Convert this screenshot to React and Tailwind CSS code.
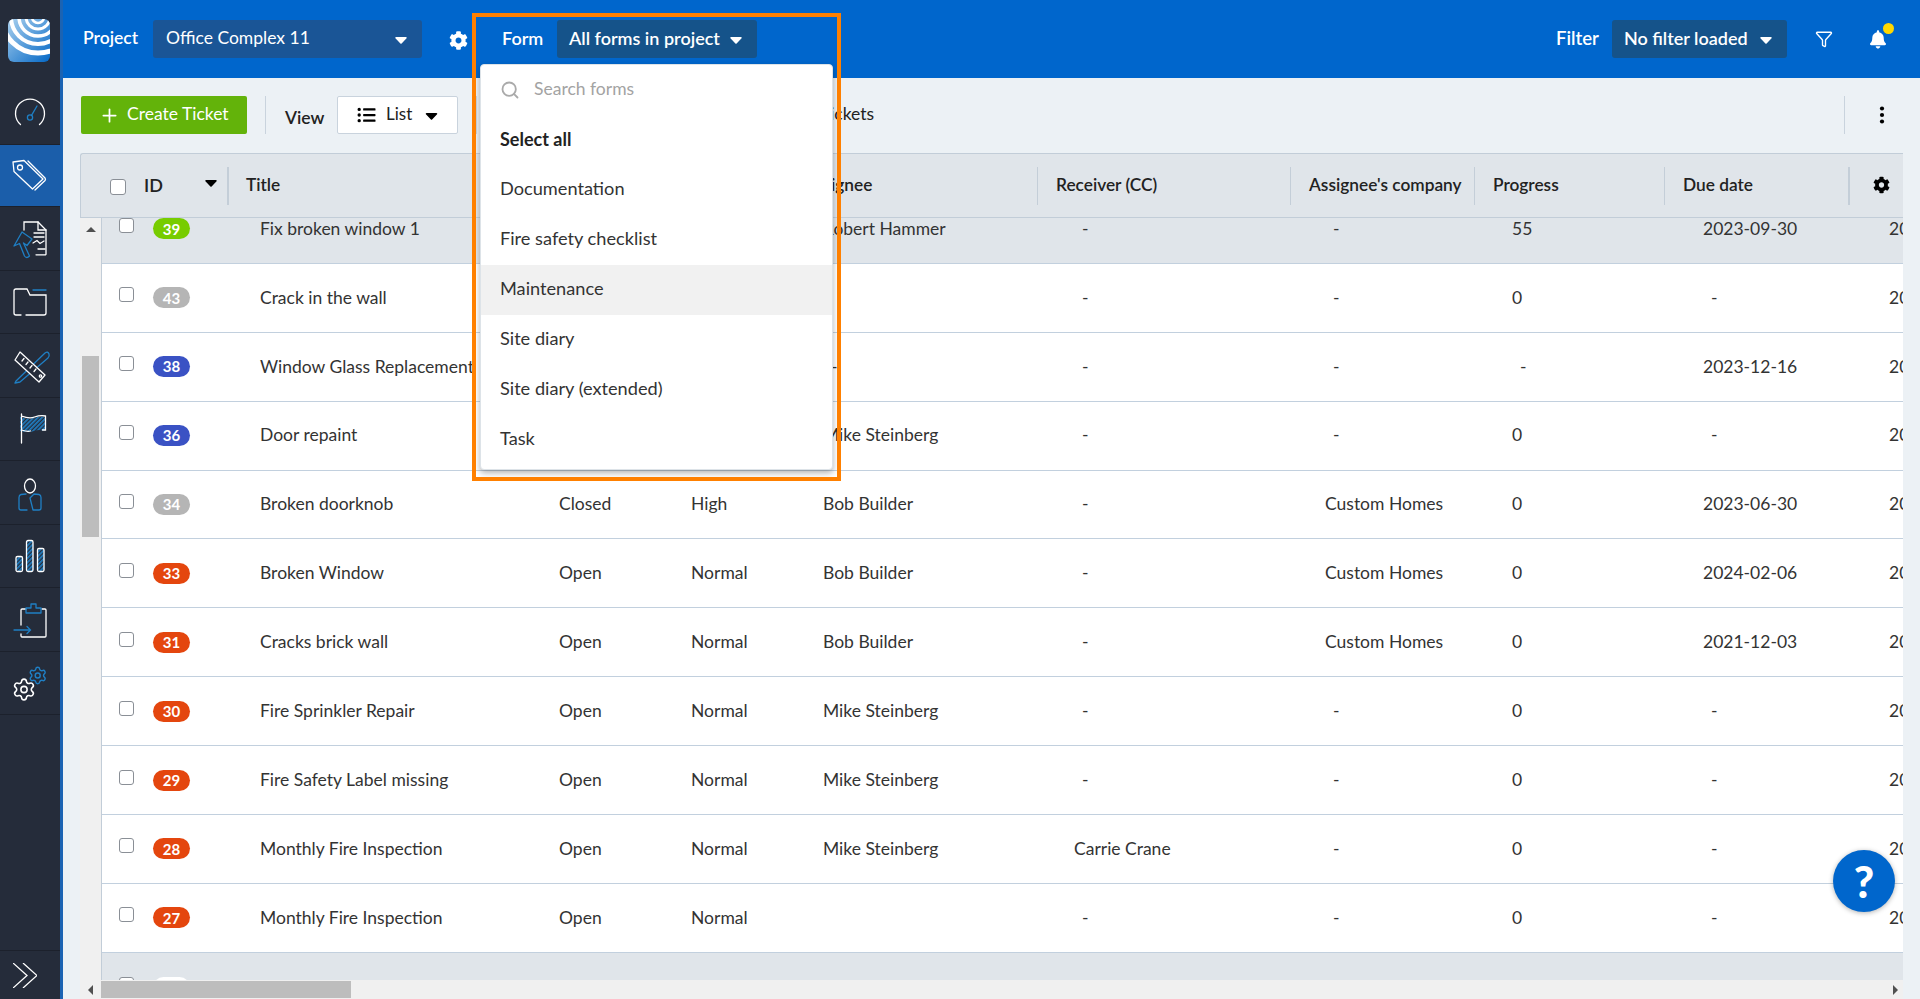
import { Plus, Search, Funnel, Settings } from "lucide-react";
import { FaCog, FaBell, FaListUl } from "react-icons/fa";

const BLUE = "#1f7fc4";

const rows = [
  { id: 39, color: "bg-[#77cc00]", title: "Fix broken window 1", status: "Open", priority: "Normal", assignee: "Robert Hammer", cc: "-", company: "-", progress: "55", due: "2023-09-30", selected: true },
  { id: 43, color: "bg-[#b5b5b5]", title: "Crack in the wall", status: "Closed", priority: "Normal", assignee: "", cc: "-", company: "-", progress: "0", due: "-" },
  { id: 38, color: "bg-[#3a52c4]", title: "Window Glass Replacement", status: "Open", priority: "Normal", assignee: "-", cc: "-", company: "-", progress: "-", due: "2023-12-16" },
  { id: 36, color: "bg-[#3a52c4]", title: "Door repaint", status: "Open", priority: "Normal", assignee: "Mike Steinberg", cc: "-", company: "-", progress: "0", due: "-" },
  { id: 34, color: "bg-[#b5b5b5]", title: "Broken doorknob", status: "Closed", priority: "High", assignee: "Bob Builder", cc: "-", company: "Custom Homes", progress: "0", due: "2023-06-30" },
  { id: 33, color: "bg-[#e4460e]", title: "Broken Window", status: "Open", priority: "Normal", assignee: "Bob Builder", cc: "-", company: "Custom Homes", progress: "0", due: "2024-02-06" },
  { id: 31, color: "bg-[#e4460e]", title: "Cracks brick wall", status: "Open", priority: "Normal", assignee: "Bob Builder", cc: "-", company: "Custom Homes", progress: "0", due: "2021-12-03" },
  { id: 30, color: "bg-[#e4460e]", title: "Fire Sprinkler Repair", status: "Open", priority: "Normal", assignee: "Mike Steinberg", cc: "-", company: "-", progress: "0", due: "-" },
  { id: 29, color: "bg-[#e4460e]", title: "Fire Safety Label missing", status: "Open", priority: "Normal", assignee: "Mike Steinberg", cc: "-", company: "-", progress: "0", due: "-" },
  { id: 28, color: "bg-[#e4460e]", title: "Monthly Fire Inspection", status: "Open", priority: "Normal", assignee: "Mike Steinberg", cc: "Carrie Crane", company: "-", progress: "0", due: "-" },
  { id: 27, color: "bg-[#e4460e]", title: "Monthly Fire Inspection", status: "Open", priority: "Normal", assignee: "", cc: "-", company: "-", progress: "0", due: "-" },
];

const forms = ["Documentation", "Fire safety checklist", "Maintenance", "Site diary", "Site diary (extended)", "Task"];

function Caret({ className = "" }) {
  return (
    <svg viewBox="0 0 12 7" className={`w-[12px] h-[7px] ${className}`} fill="currentColor">
      <path d="M1 0h10a.8.8 0 0 1 .6 1.3L6.6 6.4a.8.8 0 0 1-1.2 0L.4 1.3A.8.8 0 0 1 1 0z" />
    </svg>
  );
}

function Hatch({ id }) {
  return (
    <pattern id={id} width="3" height="3" patternUnits="userSpaceOnUse" patternTransform="rotate(45)">
      <rect width="1.7" height="3" fill={BLUE} />
    </pattern>
  );
}

/* sidebar icons, 44x44 box */
const icons = {
  dashboard: (
    <>
      <path d="M12.5 33.5A14.5 14.5 0 1 1 31.5 33.5" stroke="#fff" />
      <circle cx="22" cy="26.5" r="2.6" stroke={BLUE} />
      <path d="M23.5 24.3 29 15" stroke={BLUE} />
    </>
  ),
  tag: (
    <>
      <path d="M5 8l11-1.500 19 18.500-10.500 10L6 17.500z" stroke="#fff" strokeLinejoin="round" />
      <path d="M20 7l17 17a2 2 0 0 1 0 2.500L27 36" stroke="#fff" />
      <circle cx="12" cy="13.500" r="2.500" stroke="#fff" />
    </>
  ),
  report: (
    <>
      <path d="M16 13V5h14l8 8v24a.8.8 0 0 1-1 .8H28" stroke="#fff" />
      <path d="M30 5v8h8" stroke="#fff" />
      <path d="M26 16h10M26 20h10M25 26l4-2.500 3 3 4-2.500M30 32h7" stroke="#fff" />
      <path d="M6 29l8-14 10 7-5 6.500-3.500-2.500 6 13q-3 3-5 0l-5-12.500z" stroke={BLUE} strokeLinejoin="round" />
    </>
  ),
  folder: (
    <>
      <path d="M13 35H8a2 2 0 0 1-2-2V11a2 2 0 0 1 2-2h11l3 6h16v18a2 2 0 0 1-2 2H18" stroke="#fff" />
      <path d="M25 10h13" stroke={BLUE} />
    </>
  ),
  tools: (
    <>
      <path d="M8 37 37 9q3-2 4 1 .8 2.500-1 4L12 38l-5 1z" stroke={BLUE} strokeLinejoin="round" />
      <path d="M12 8 37 31l-6 7L7 16z" stroke="#fff" fill="#252c3a" strokeLinejoin="round" />
      <path d="M14 17l2-2.500M18 20.500l2-2.500M22 24l2-2.500M26 27.500l2-2.500" stroke="#fff" />
      <circle cx="32.500" cy="32" r="1.200" stroke="#fff" />
    </>
  ),
  flag: (
    <>
      <path d="M12 9h0q8 3 14 1 6-2 11-1v14q-6-2-11 0t-14 0z" fill="url(#hatch-flag)" transform="translate(0 1)" />
      <path d="M13.500 7v29M13.500 9q8 3 13 1 6-2 11-1v14h-3M13.500 23q6 2 9 1" stroke="#fff" />
    </>
  ),
  person: (
    <>
      <ellipse cx="22" cy="15" rx="5.500" ry="7" stroke="#fff" />
      <path d="M18 23l-5 .5q-2 .5-2 3V37q0 2 2 2h6M25 39h6q2 0 2-2V26.500q0-2.500-2-3l-5-.5-4 4z" stroke={BLUE} strokeLinejoin="round" />
    </>
  ),
  bars: (
    <>
      <rect x="8" y="22.500" width="6.500" height="15" rx="1.500" fill="url(#hatch-bars)" stroke="#fff" />
      <rect x="18.500" y="6.500" width="6.500" height="31" rx="1.500" fill="url(#hatch-bars)" stroke="#fff" />
      <rect x="29.500" y="14.500" width="6.500" height="23" rx="1.500" fill="url(#hatch-bars)" stroke="#fff" />
    </>
  ),
  clipboard: (
    <>
      <path d="M18 11h-4q-1 0-1 1v15M13 36v2q0 1 1 1h23q1 0 1-1V12q0-1-1-1h-3" stroke="#fff" />
      <path d="M18 15v-5h5V6h5v4h5v5z" stroke={BLUE} strokeLinejoin="round" />
      <path d="M6 32h16M19 28.500l3.500 3.500-3.500 3.500" stroke={BLUE} />
    </>
  ),
  gears: (
    <>
      <Settings x="3.500" y="16" width="25" height="25" color="#fff" strokeWidth={1.500} />
      <Settings x="19.700" y="4.500" width="20" height="20" color={BLUE} strokeWidth={1.700} />
    </>
  ),
};

function NavItem({ name, active, height }) {
  return (
    <div className={`${height} flex items-center justify-center border-b border-[#1c212c] ${active ? "bg-[#1b5eaa]" : ""}`}>
      <svg viewBox="0 0 44 44" className="w-[44px] h-[44px]" fill="none" strokeWidth="1.300" strokeLinecap="round">
        <defs>
          <Hatch id="hatch-flag" />
          <Hatch id="hatch-bars" />
        </defs>
        {icons[name]}
      </svg>
    </div>
  );
}

function Logo() {
  return (
    <svg viewBox="0 0 42 43" className="w-[42px] h-[43px] ml-[8px] mt-[19px]">
      <defs>
        <clipPath id="logo-clip">
          <rect width="42" height="43" rx="6" />
        </clipPath>
        <linearGradient id="logo-bg" x1="0" y1="0" x2="1" y2="1">
          <stop offset="0" stopColor="#a9d0ee" />
          <stop offset="1" stopColor="#0468c6" />
        </linearGradient>
      </defs>
      <g clipPath="url(#logo-clip)">
        <rect width="42" height="43" fill="url(#logo-bg)" />
        <g fill="none" stroke="#fff">
          <circle cx="30" cy="-2" r="6" strokeWidth="2.500" />
          <circle cx="30" cy="-2" r="12" strokeWidth="3" />
          <circle cx="30" cy="-2" r="19" strokeWidth="3.500" />
          <circle cx="30" cy="-2" r="27" strokeWidth="4" />
          <circle cx="30" cy="-2" r="36" strokeWidth="5" />
        </g>
      </g>
    </svg>
  );
}

function Sidebar() {
  return (
    <aside className="w-[63px] shrink-0 h-full flex flex-col bg-[#252c3a] border-r-[3px] border-[#1b63b3]">
      <div className="h-[81px] shrink-0">
        <Logo />
      </div>
      <div className="h-[64px] flex items-center justify-center border-b border-[#1c212c]">
        <svg viewBox="0 0 44 44" className="w-[44px] h-[44px] mt-[1px]" fill="none" strokeWidth="1.300" strokeLinecap="round">
          {icons.dashboard}
        </svg>
      </div>
      <NavItem name="tag" active height="h-[62px]" />
      <NavItem name="report" height="h-[64px]" />
      <NavItem name="folder" height="h-[63px]" />
      <NavItem name="tools" height="h-[64px]" />
      <NavItem name="flag" height="h-[63px]" />
      <NavItem name="person" height="h-[64px]" />
      <NavItem name="bars" height="h-[63px]" />
      <NavItem name="clipboard" height="h-[64px]" />
      <NavItem name="gears" height="h-[63px]" />
      <div className="flex-1" />
      <div className="h-[49px] border-t border-[#1c212c] flex items-center pl-[13px]">
        <svg viewBox="0 0 24 25" className="w-[24px] h-[25px]" fill="none" stroke="#fff" strokeWidth="1.300">
          <path d="M0 0l14 12.500L0 25M10 0l14 12.500L10 25" />
        </svg>
      </div>
    </aside>
  );
}

function HeaderSelect({ label, width, bg, bold }) {
  return (
    <div className={`${width} ${bg} h-[38px] rounded-[3px] flex items-center justify-between pr-[15px] text-white ${bold ? "pl-[12px] font-semibold text-[18px]" : "pl-[13px] font-normal text-[17.5px]"}`}>
      <span className="-mt-[2px] whitespace-nowrap">{label}</span>
      <Caret className="mt-[2px]" />
    </div>
  );
}

function TopBar() {
  return (
    <header className="h-[78px] shrink-0 bg-[#0066cc] flex items-center pl-[20px] pr-[34px] text-white text-[18px] font-semibold">
      <span className="w-[70px] -mt-[1px] text-[17.5px]">Project</span>
      <HeaderSelect label="Office Complex 11" width="w-[269px]" bg="bg-[#1a5596]" />
      <FaCog className="w-[19px] h-[21px] ml-[27px] mt-[2px]" />
      <span className="ml-[34px] w-[55px] -mt-[1px]">Form</span>
      <HeaderSelect label="All forms in project" width="w-[200px]" bg="bg-[#15538a]" bold />
      <span className="ml-auto w-[56px] -mt-[1px] text-[18.5px]">Filter</span>
      <HeaderSelect label="No filter loaded" width="w-[175px]" bg="bg-[#15538a]" bold />
      <Funnel className="w-[18px] h-[18px] ml-[28px]" strokeWidth={1.800} />
      <div className="relative ml-[37px]">
        <FaBell className="w-[16px] h-[19px]" />
        <span className="absolute -top-[7px] -right-[8px] w-[11px] h-[11px] rounded-full bg-[#ffd800]" />
      </div>
    </header>
  );
}

function Toolbar() {
  return (
    <div className="h-[38px] mt-[18px] ml-[18px] mr-[17px] flex items-stretch shrink-0 text-[#222]">
      <button className="w-[166px] bg-[#63b30a] rounded-[2px] text-white text-[17.5px] flex items-center pl-[18px]">
        <Plus className="w-[21px] h-[21px] mr-[7px]" strokeWidth={2} />
        <span className="-mt-[2px]">Create Ticket</span>
      </button>
      <div className="w-px bg-[#c9d3dd] ml-[18px]" />
      <span className="ml-[19px] w-[52px] self-center mt-[6px] text-[17.5px] font-semibold">View</span>
      <div className="w-[121px] bg-white border border-[#c9d3dd] rounded-[2px] flex items-center pl-[18px]">
        <FaListUl className="w-[21px] h-[18px] text-black" />
        <span className="ml-[9px] text-[17px] -mt-[2px]">List</span>
        <Caret className="ml-[13px] mt-[2px] text-black w-[13px]" />
      </div>
      <div className="w-px bg-[#c9d3dd] ml-[18px]" />
      <span className="ml-[322px] self-center text-[17.5px] -mt-[1px]">All tickets</span>
      <div className="ml-auto w-px bg-[#c9d3dd]" />
      <svg viewBox="0 0 6 18" className="w-[6px] h-[18px] self-center ml-[34px] mr-[18px]" fill="#000">
        <circle cx="3" cy="2.500" r="2.100" />
        <circle cx="3" cy="9" r="2.100" />
        <circle cx="3" cy="15.500" r="2.100" />
      </svg>
    </div>
  );
}

function HeadCell({ children, thick }) {
  return (
    <div className={`h-[38px] flex items-center pl-[18px] whitespace-nowrap font-semibold text-[17.3px] border-l border-[#c4ced8] ${thick ? "border-l-[2px]" : ""}`}>
      {children}
    </div>
  );
}

function TableHead() {
  return (
    <div className="relative z-10 h-[65px] shrink-0 bg-[#e0e5ea] border border-[#c2cdd8] border-r-0 rounded-tl-[3px] grid grid-cols-[146px_313px_132px_113px_252px_253px_184px_190px_184px_55px] items-center text-[#222]">
      <div className="flex items-center pl-[29px] font-semibold text-[18px]">
        <span className="w-[16px] h-[16px] rounded-[3px] bg-white border border-[#8a8f96] mt-[2px]" />
        <span className="ml-[18px] -mt-[1px]">ID</span>
        <Caret className="ml-[42px] -mt-[4px] text-black" />
      </div>
      <HeadCell thick>
        <span className="-mt-[1px] -ml-[1px]">Title</span>
      </HeadCell>
      <HeadCell>Status</HeadCell>
      <HeadCell>Priority</HeadCell>
      <HeadCell>
        <span className="-mt-[1px]">Assignee</span>
      </HeadCell>
      <HeadCell>
        <span className="-mt-[1px]">Receiver (CC)</span>
      </HeadCell>
      <HeadCell>
        <span className="-mt-[1px]">Assignee's company</span>
      </HeadCell>
      <HeadCell>
        <span className="-mt-[1px]">Progress</span>
      </HeadCell>
      <HeadCell>
        <span className="-mt-[1px]">Due date</span>
      </HeadCell>
      <HeadCell thick>
        <FaCog className="w-[17px] h-[18px] ml-[5px] -mt-[2px] text-black" />
      </HeadCell>
    </div>
  );
}

function Cell({ value }) {
  return <div className={`whitespace-nowrap overflow-hidden ${value === "-" ? "pl-[8px]" : ""}`}>{value}</div>;
}

function Row({ row }) {
  return (
    <div className={`h-[68.9px] border-b border-[#c2d0de] grid grid-cols-[158px_299px_132px_132px_251px_251px_187px_191px_186px_66px] items-center text-[17.5px] text-[#333] ${row.selected ? "bg-[#e0e5ea]" : "bg-white"}`}>
      <div className="flex items-center pl-[17px]">
        <span className="w-[15px] h-[15px] rounded-[3px] bg-white border border-[#8a8f96] -mt-[6px]" />
        <span className={`ml-[19px] w-[37px] h-[21px] rounded-full ${row.color} text-white text-[15px] font-bold flex items-center justify-center`}>{row.id}</span>
      </div>
      <div className="whitespace-nowrap">{row.title}</div>
      <Cell value={row.status} />
      <Cell value={row.priority} />
      <Cell value={row.assignee} />
      <Cell value={row.cc} />
      <Cell value={row.company} />
      <Cell value={row.progress} />
      <Cell value={row.due} />
      <div className="whitespace-nowrap">2023-01-10</div>
    </div>
  );
}

function TableBody() {
  return (
    <div className="flex-1 min-h-0 flex overflow-hidden">
      <div className="w-[21px] shrink-0 bg-[#f0f0f0] flex flex-col items-center">
        <span className="mt-[9px] w-0 h-0 border-x-[5px] border-x-transparent border-b-[5px] border-b-[#505050]" />
        <span className="mt-[124px] w-[17px] h-[181px] bg-[#bdbdbd]" />
      </div>
      <div className="flex-1 min-w-0 border-l border-[#c2cdd8] bg-[#e0e5ea] overflow-hidden">
        <div className="-mt-[23px]">
          {rows.map((row) => (
            <Row key={row.id} row={row} />
          ))}
          <div className="flex items-start pl-[17px] pt-[24px]">
            <span className="w-[15px] h-[15px] rounded-[3px] bg-white border border-[#8a8f96]" />
            <span className="ml-[19px] w-[37px] h-[21px] rounded-full bg-white" />
          </div>
        </div>
      </div>
    </div>
  );
}

function HScrollbar() {
  return (
    <div className="h-[19px] shrink-0 bg-[#f0f0f0] flex items-center relative z-10">
      <span className="ml-[8px] w-0 h-0 border-y-[5px] border-y-transparent border-r-[5px] border-r-[#505050]" />
      <span className="ml-[8px] w-[250px] h-[17px] -mt-[1px] bg-[#bdbdbd]" />
      <span className="ml-auto mr-[5px] w-0 h-0 border-y-[5px] border-y-transparent border-l-[5px] border-l-[#505050]" />
    </div>
  );
}

function FormsDropdown() {
  return (
    <div className="absolute z-20 left-[480px] top-[64px] w-[353px] h-[406px] bg-white rounded-[4px] border border-[#dde3e8] shadow-[0_3px_6px_rgba(0,0,0,0.3)] text-[18.2px] text-[#333] overflow-hidden">
      <div className="h-[50px] flex items-center pl-[19px] text-[#a3a3a3] text-[17.5px]">
        <Search className="w-[20px] h-[20px] text-[#aaaaaa]" strokeWidth={2.200} />
        <span className="ml-[14px] -mt-[2px]">Search forms</span>
      </div>
      <div className="h-[50px] flex items-center pl-[19px] pb-[2px] font-bold text-[18px] text-[#222]">Select all</div>
      {forms.map((form) => (
        <div key={form} className={`h-[50px] flex items-center pl-[19px] pb-[3px] ${form === "Maintenance" ? "bg-[#f1f1f1]" : ""}`}>
          {form}
        </div>
      ))}
    </div>
  );
}

export default function App() {
  return (
    <div className="relative w-[1920px] h-[999px] flex overflow-hidden bg-[#ecf1f5] font-[Lato,sans-serif]">
      <Sidebar />
      <main className="flex-1 min-w-0 flex flex-col">
        <TopBar />
        <Toolbar />
        <div className="flex-1 min-h-0 flex flex-col mt-[19px] ml-[17px] mr-[17px]">
          <TableHead />
          <TableBody />
          <HScrollbar />
        </div>
      </main>
      <FormsDropdown />
      {/* orange annotation box */}
      <div className="absolute z-30 left-[472px] top-[13px] w-[369px] h-[468px] border-4 border-[#ff8000] pointer-events-none" />
      <div className="absolute z-30 left-[1833px] top-[850px] w-[62px] h-[62px] rounded-full bg-[#0066cc] shadow-[0_1px_5px_rgba(0,0,0,0.3)] flex items-center justify-center text-white text-[44px] font-black leading-none">
        ?
      </div>
    </div>
  );
}
